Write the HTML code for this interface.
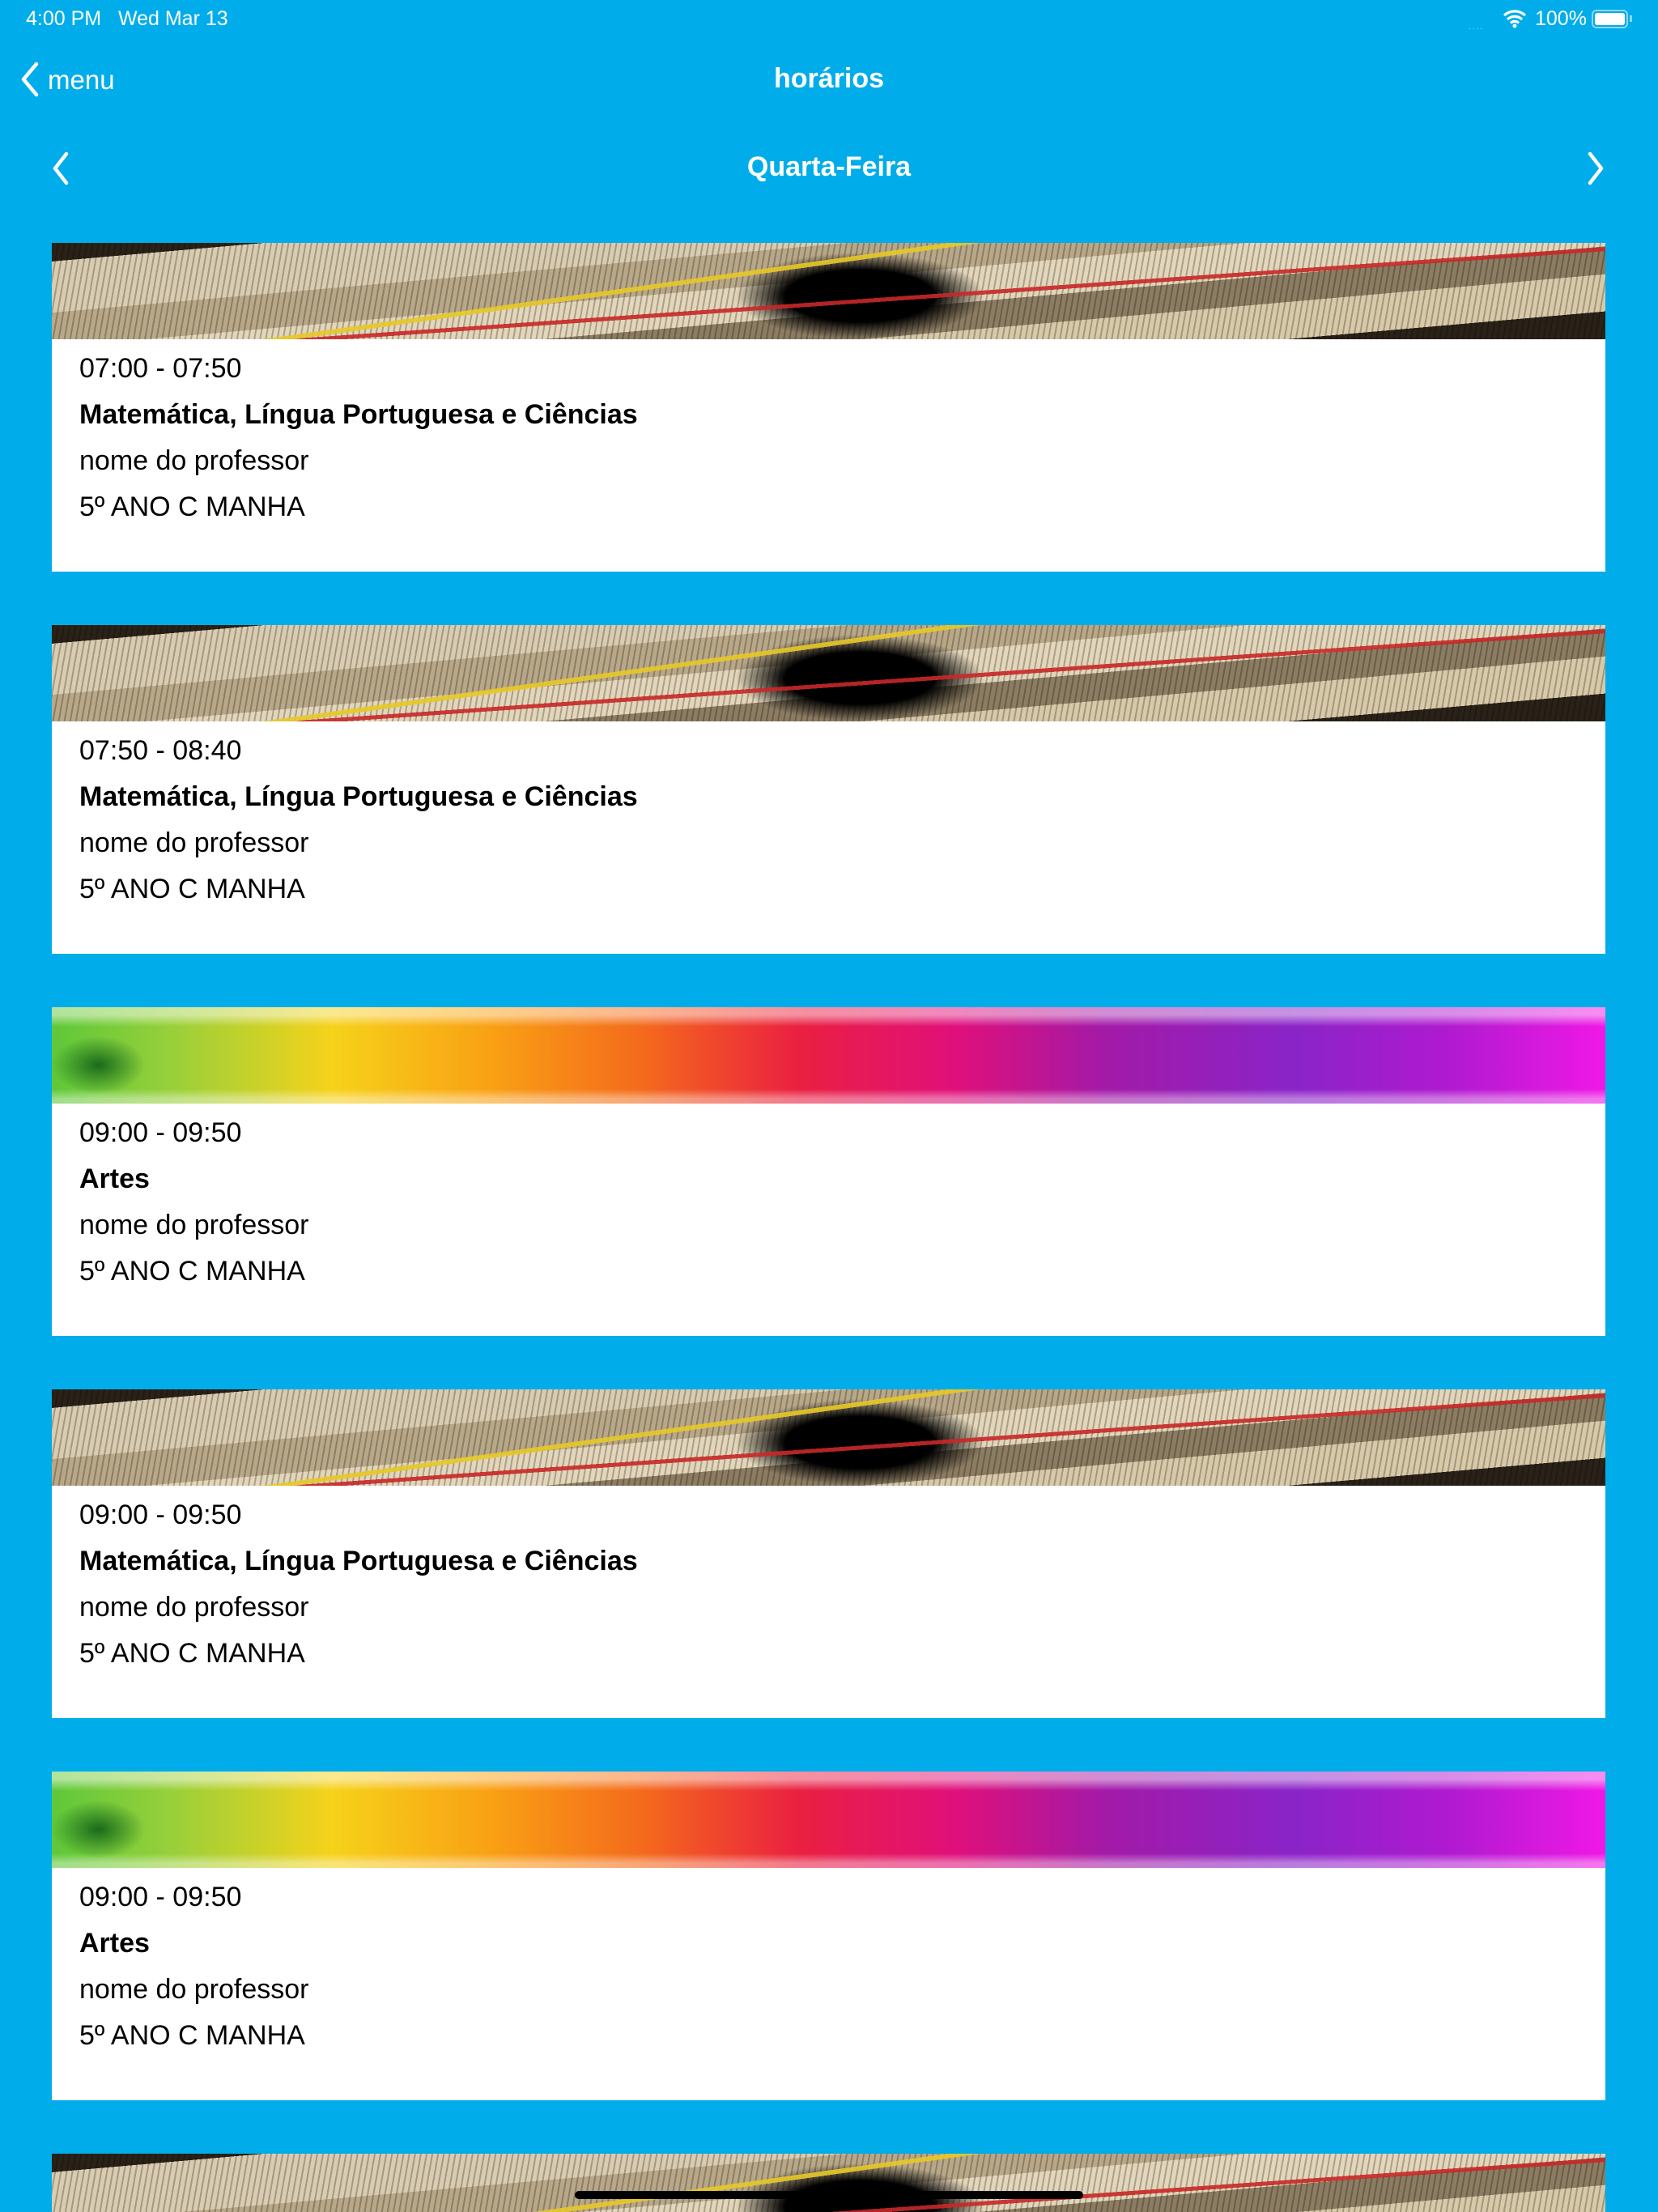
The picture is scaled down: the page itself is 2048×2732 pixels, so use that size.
<!DOCTYPE html>
<html style="width:2048px;height:2732px;overflow:hidden"><head><meta charset="utf-8"><style>
*{margin:0;padding:0;box-sizing:border-box}
body{width:2048px;height:2732px;background:#00ADEA;font-family:"Liberation Sans",sans-serif;position:relative;overflow:hidden;color:#fff}
.abs{position:absolute}
.card{position:absolute;left:64px;width:1919px;height:406px;background:#fff;overflow:hidden}
.img{height:119px;width:100%}
.books{background:
 linear-gradient(172deg,transparent 0 40%,rgba(230,200,40,.9) 40% 41.5%,transparent 41.5%),
 linear-gradient(176deg,transparent 0 55%,rgba(200,40,40,.9) 55% 57%,transparent 57%),
 repeating-linear-gradient(100deg,rgba(0,0,0,.25) 0 2px,transparent 2px 7px),
 radial-gradient(ellipse 8% 45% at 52% 55%,#000 0 60%,transparent 100%),
 linear-gradient(175deg,#2a2218 0 8%,#d9ccb0 8% 30%,#b9a888 30% 45%,#e3d6ba 45% 60%,#8c7c62 60% 72%,#d8c9a8 72% 88%,#2a2218 88%)}
.paint{background:
 radial-gradient(ellipse 3% 30% at 3% 60%,#1a6a1a 0,transparent 100%),
 linear-gradient(180deg,rgba(255,255,255,.5) 0 8%,transparent 20% 85%,rgba(255,255,255,.4) 95%),
 linear-gradient(90deg,#5ec83a 0,#9ad03a 8%,#f6d21a 18%,#f9a214 28%,#f46a1c 38%,#ea2040 48%,#e0107a 58%,#a21aa8 68%,#8a24c8 80%,#b01ad0 90%,#f018e6 100%)}
.t{position:absolute;left:34px;font-size:34px;color:#000;line-height:40px}
</style></head><body>
<div class="abs" style="left:32px;top:9px;font-size:25px">4:00 PM&nbsp;&nbsp;&nbsp;Wed Mar 13</div>
<div class="abs" style="left:1814px;top:28px;font-size:10px;color:#9fdcf5;letter-spacing:2px">....</div>
<svg class="abs" style="left:1856px;top:11px" width="30" height="24" viewBox="0 0 30 24"><path d="M2 8a19 19 0 0 1 26 0M6 13a13 13 0 0 1 18 0M10 17.5a7 7 0 0 1 10 0" stroke="#fff" stroke-width="3.2" fill="none"/><circle cx="15" cy="21" r="2.5" fill="#fff"/></svg>
<div class="abs" style="left:1896px;top:9px;font-size:25px">100%</div>
<div class="abs" style="left:1966px;top:12px;width:45px;height:23px;border:2px solid #8fd6f2;border-radius:6px;padding:2px"><div style="background:#fff;width:100%;height:100%;border-radius:3px"></div></div>
<div class="abs" style="left:2013px;top:19px;width:3px;height:8px;background:#8fd6f2"></div>
<svg class="abs" style="left:24px;top:76px" width="26" height="44" viewBox="0 0 26 44"><path d="M21 3 5 22l16 19" stroke="#fff" stroke-width="4.5" fill="none" stroke-linecap="round" stroke-linejoin="round"/></svg>
<div class="abs" style="left:59px;top:80px;font-size:33px">menu</div>
<div class="abs" style="left:0;width:2048px;text-align:center;top:78px;font-size:34px;font-weight:bold">horários</div>
<svg class="abs" style="left:62px;top:186px" width="26" height="44" viewBox="0 0 26 44"><path d="M20 4 6 22l14 18" stroke="#fff" stroke-width="4.5" fill="none" stroke-linecap="round" stroke-linejoin="round"/></svg>
<svg class="abs" style="left:1958px;top:186px" width="26" height="44" viewBox="0 0 26 44"><path d="M6 4l14 18L6 40" stroke="#fff" stroke-width="4.5" fill="none" stroke-linecap="round" stroke-linejoin="round"/></svg>
<div class="abs" style="left:0;width:2048px;text-align:center;top:187px;font-size:34px;font-weight:bold">Quarta-Feira</div>

<div class="card" style="top:300px"><div class="img books"></div>
<div class="t" style="top:135px">07:00 - 07:50</div><div class="t" style="top:192px;font-weight:bold">Matemática, Língua Portuguesa e Ciências</div><div class="t" style="top:249px">nome do professor</div><div class="t" style="top:306px">5º ANO C MANHA</div></div>
<div class="card" style="top:772px"><div class="img books"></div>
<div class="t" style="top:135px">07:50 - 08:40</div><div class="t" style="top:192px;font-weight:bold">Matemática, Língua Portuguesa e Ciências</div><div class="t" style="top:249px">nome do professor</div><div class="t" style="top:306px">5º ANO C MANHA</div></div>
<div class="card" style="top:1244px"><div class="img paint"></div>
<div class="t" style="top:135px">09:00 - 09:50</div><div class="t" style="top:192px;font-weight:bold">Artes</div><div class="t" style="top:249px">nome do professor</div><div class="t" style="top:306px">5º ANO C MANHA</div></div>
<div class="card" style="top:1716px"><div class="img books"></div>
<div class="t" style="top:135px">09:00 - 09:50</div><div class="t" style="top:192px;font-weight:bold">Matemática, Língua Portuguesa e Ciências</div><div class="t" style="top:249px">nome do professor</div><div class="t" style="top:306px">5º ANO C MANHA</div></div>
<div class="card" style="top:2188px"><div class="img paint"></div>
<div class="t" style="top:135px">09:00 - 09:50</div><div class="t" style="top:192px;font-weight:bold">Artes</div><div class="t" style="top:249px">nome do professor</div><div class="t" style="top:306px">5º ANO C MANHA</div></div>
<div class="card" style="top:2660px;height:72px"><div class="img books"></div></div>
<div class="abs" style="left:710px;top:2706px;width:628px;height:10px;background:#000;border-radius:5px"></div>
</body></html>
